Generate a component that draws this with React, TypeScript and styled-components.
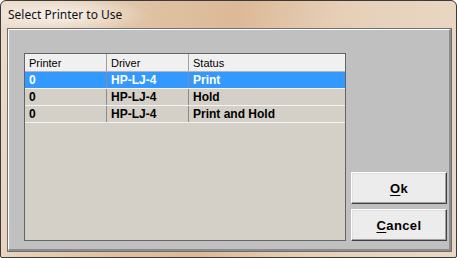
import styled, { createGlobalStyle } from 'styled-components';

const GlobalStyle = createGlobalStyle`
  html, body {
    margin: 0;
    padding: 0;
    background: #ffffff;
  }
  * {
    box-sizing: border-box;
  }
`;

interface PrinterRow {
  printer: string;
  driver: string;
  status: string;
}

const ROWS: PrinterRow[] = [
  { printer: '0', driver: 'HP-LJ-4', status: 'Print' },
  { printer: '0', driver: 'HP-LJ-4', status: 'Hold' },
  { printer: '0', driver: 'HP-LJ-4', status: 'Print and Hold' },
];

const COLUMNS = '82px 82px 1fr';

const Window = styled.div`
  width: 457px;
  height: 258px;
  display: flex;
  flex-direction: column;
  border: 1px solid #3a3a3a;
  border-radius: 6px 6px 2px 2px;
  background: linear-gradient(100deg, #ecdccb 0%, #dfc2a3 30%, #dcb998 48%, #e6cfb6 68%, #ead9c7 100%);
  overflow: hidden;
`;

const TitleBar = styled.div`
  height: 28px;
  display: flex;
  align-items: center;
  padding: 0 0 2px 7px;
  font-family: 'Noto Sans', 'Open Sans', sans-serif;
  font-size: 12px;
  color: #111111;
  background: radial-gradient(ellipse 90px 18px at 60px 14px, rgba(255, 255, 255, 0.7), rgba(255, 255, 255, 0));
`;

const Frame = styled.div`
  flex: 1;
  display: flex;
  padding: 0 7px 6px 7px;
`;

const Client = styled.div`
  flex: 1;
  display: flex;
  gap: 5px;
  padding: 23px 2px 8px 15px;
  background: #c0c0c0;
  border-top: 1px solid #ffffff;
  border-left: 1px solid #ffffff;
  border-right: 2px solid #8c8c8c;
  border-bottom: 2px solid #8c8c8c;
  box-shadow: 0 0 0 1px #6e6e6e;
`;

const Table = styled.div`
  width: 322px;
  display: flex;
  flex-direction: column;
  background: #d4d0c8;
  border: 1px solid #646464;
  font-family: 'Liberation Sans', Arial, sans-serif;
`;

const HeaderRow = styled.div`
  display: grid;
  grid-template-columns: ${COLUMNS};
  height: 18px;
  background: #f0f0f0;
  border-bottom: 1px solid #b4b4b4;
  font-size: 11px;
`;

const HeaderCell = styled.div`
  display: flex;
  align-items: center;
  padding-left: 4px;
  color: #000000;
  border-right: 1px solid #a0a0a0;

  &:last-child {
    border-right: none;
  }
`;

const BodyRow = styled.div<{ $selected?: boolean }>`
  display: grid;
  grid-template-columns: ${COLUMNS};
  height: 17px;
  background: ${(p) => (p.$selected ? '#3399ff' : '#d4d0c8')};
  color: ${(p) => (p.$selected ? '#ffffff' : '#000000')};
  border-bottom: 1px solid #f4f4f4;
  font-size: 12px;
  font-weight: bold;
`;

const BodyCell = styled.div`
  display: flex;
  align-items: center;
  padding-left: 4px;
  border-right: 1px solid #8c8c8c;

  &:last-child {
    border-right: none;
  }
`;

const Side = styled.div`
  flex: 1;
  display: flex;
  flex-direction: column;
  justify-content: flex-end;
  gap: 5px;
`;

const Button = styled.button`
  width: 96px;
  height: 32px;
  padding: 0;
  background: #ececec;
  border: 1px solid;
  border-color: #ffffff #404040 #404040 #ffffff;
  box-shadow: inset -1px -1px 0 #a0a0a0, inset 1px 1px 0 #e0e0e0;
  font-family: 'Liberation Sans', Arial, sans-serif;
  font-size: 13px;
  font-weight: bold;
  letter-spacing: 0.4px;
  color: #000000;

  u {
    text-decoration-thickness: 1px;
    text-underline-offset: 2px;
  }
`;

const App = () => {
  return (
    <>
      <GlobalStyle />
      <Window>
        <TitleBar>Select Printer to Use</TitleBar>
        <Frame>
          <Client>
            <Table>
              <HeaderRow>
                <HeaderCell>Printer</HeaderCell>
                <HeaderCell>Driver</HeaderCell>
                <HeaderCell>Status</HeaderCell>
              </HeaderRow>
              {ROWS.map((row, i) => (
                <BodyRow key={i} $selected={i === 0}>
                  <BodyCell>{row.printer}</BodyCell>
                  <BodyCell>{row.driver}</BodyCell>
                  <BodyCell>{row.status}</BodyCell>
                </BodyRow>
              ))}
            </Table>
            <Side>
              <Button>
                <u>O</u>k
              </Button>
              <Button>
                <u>C</u>ancel
              </Button>
            </Side>
          </Client>
        </Frame>
      </Window>
    </>
  );
};

App.displayName = 'App';

export default App;
